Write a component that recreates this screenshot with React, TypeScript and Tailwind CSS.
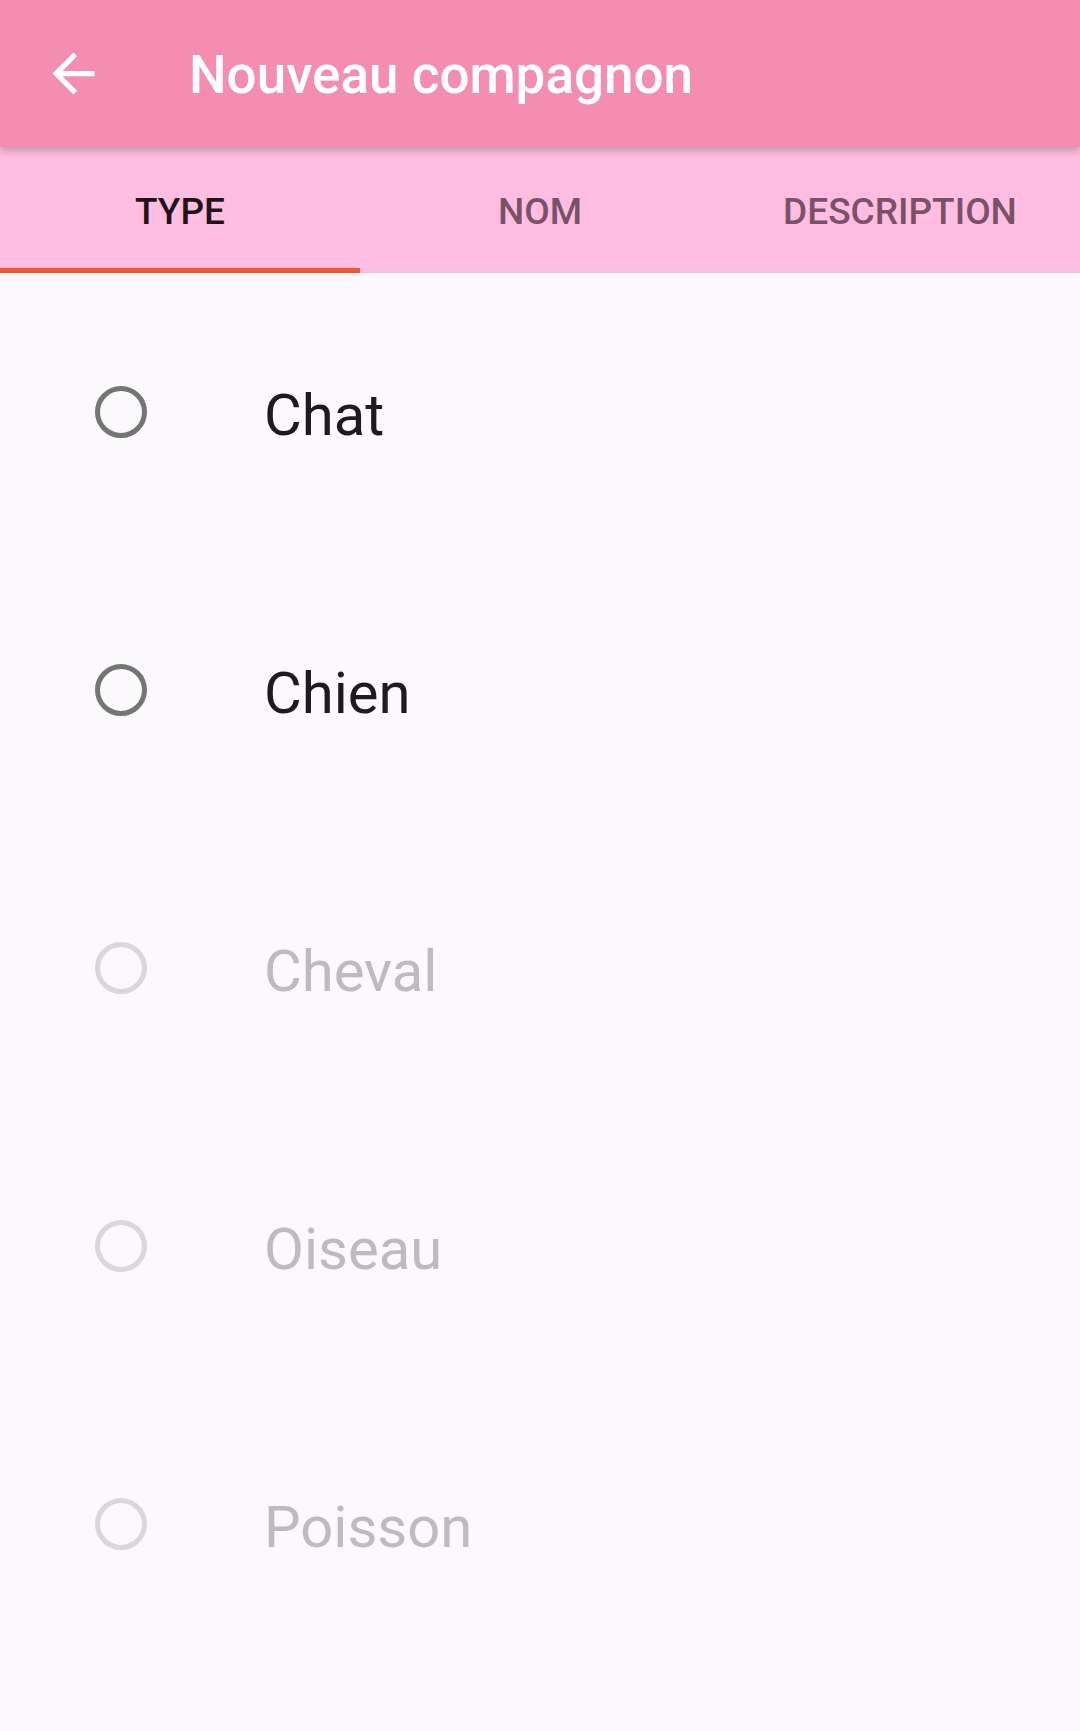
import React from "react";

const items = [
  { label: "Chat", enabled: true },
  { label: "Chien", enabled: true },
  { label: "Cheval", enabled: false },
  { label: "Oiseau", enabled: false },
  { label: "Poisson", enabled: false },
];

function Radio({ enabled }: { enabled: boolean }) {
  return (
    <div
      className={
        "w-[52px] h-[52px] rounded-full border-[5px] " +
        (enabled ? "border-[#757575]" : "border-[#d9d7da]")
      }
    />
  );
}

export default function App() {
  return (
    <div
      className="w-[1080px] h-[1731px] bg-[#fbf9fc] flex flex-col overflow-hidden"
      style={{ fontFamily: "Roboto, 'Noto Sans', sans-serif" }}
    >
      <div className="relative z-10 h-[147px] bg-[#f38eb1] flex items-center shadow-[0_4px_8px_rgba(0,0,0,0.22)]">
        <div className="w-[147px] h-[147px] flex items-center justify-center">
          <svg width="63" height="63" viewBox="0 0 24 24" fill="none">
            <path
              d="M20 11H7.83l5.59-5.59L12 4l-8 8 8 8 1.41-1.41L7.83 13H20v-2z"
              fill="#ffffff"
            />
          </svg>
        </div>
        <div className="ml-[42px] mt-[4px] text-white text-[53px] font-medium leading-none">
          Nouveau compagnon
        </div>
      </div>
      <div className="relative h-[126px] bg-[#ffbee1] grid grid-cols-3">
        <div className="relative flex items-center justify-center pt-[4px] text-[37px] font-medium text-[#1f1519]">
          TYPE
          <div className="absolute left-0 right-0 bottom-0 h-[5px] bg-[#f4582a]" />
        </div>
        <div className="flex items-center justify-center pt-[4px] text-[37px] font-medium text-[#7a5266]">
          NOM
        </div>
        <div className="flex items-center justify-center pt-[4px] text-[37px] font-medium text-[#7a5266]">
          DESCRIPTION
        </div>
      </div>
      <div className="flex flex-col">
        {items.map((it) => (
          <div key={it.label} className="h-[278px] flex items-center">
            <div className="ml-[95px]">
              <Radio enabled={it.enabled} />
            </div>
            <div
              className={
                "ml-[117px] mt-[6px] text-[58px] leading-none " +
                (it.enabled ? "text-[#1d1b1e]" : "text-[#bdbbbe]")
              }
            >
              {it.label}
            </div>
          </div>
        ))}
      </div>
    </div>
  );
}
